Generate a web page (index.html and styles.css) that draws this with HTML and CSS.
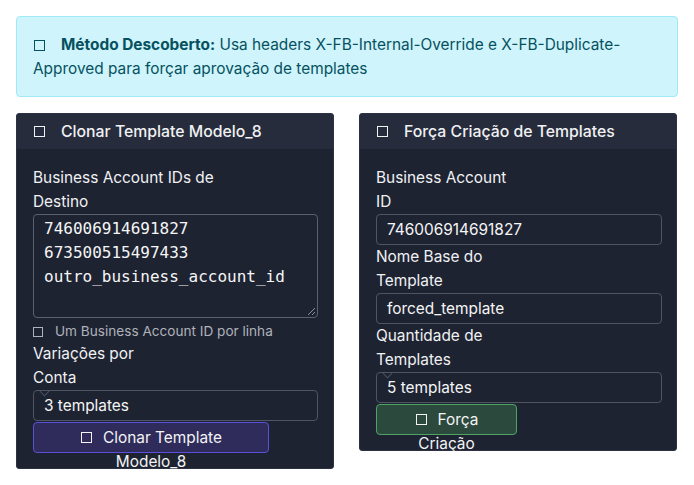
FILE: index.html
```html
<!DOCTYPE html>
<html lang="pt">
<head>
<meta charset="utf-8">
<title>Templates</title>
<link rel="stylesheet" href="styles.css">
</head>
<body>
<div class="page">
  <div class="alert">
    <span class="ico"></span><strong>Método Descoberto:</strong> Usa headers X-FB-Internal-Override e X-FB-Duplicate-Approved para forçar aprovação de templates
  </div>
  <div class="grid">
    <div class="card card-left">
      <div class="card-header"><span class="ico"></span>Clonar Template Modelo_8</div>
      <div class="card-body">
        <label class="lbl">Business Account IDs de<br>Destino</label>
        <div class="textarea">746006914691827<br>673500515497433<br>outro_business_account_id<span class="grip"></span></div>
        <div class="help"><span class="ico ico-sm"></span>Um Business Account ID por linha</div>
        <label class="lbl">Variações por<br>Conta</label>
        <div class="select">3 templates</div>
        <div class="btn btn-purple"><span class="ico"></span>Clonar Template<br>Modelo_8</div>
      </div>
    </div>
    <div class="card card-right">
      <div class="card-header"><span class="ico"></span>Força Criação de Templates</div>
      <div class="card-body">
        <label class="lbl">Business Account<br>ID</label>
        <div class="input">746006914691827</div>
        <label class="lbl">Nome Base do<br>Template</label>
        <div class="input">forced_template</div>
        <label class="lbl">Quantidade de<br>Templates</label>
        <div class="select">5 templates</div>
        <div class="btn btn-green"><span class="ico"></span>Força<br>Criação</div>
      </div>
    </div>
  </div>
</div>
</body>
</html>
```
FILE: styles.css
```css
* { box-sizing: border-box; }
html, body { margin: 0; padding: 0; background: #ffffff; }
body { font-family: Inter, "Noto Sans", sans-serif; font-size: 15.4px; line-height: 24px; }
.page { padding: 16px; }

.ico {
  display: inline-block;
  width: 11px;
  height: 11px;
  border: 1.5px solid currentColor;
  margin: 0 16px 0 1px;
  vertical-align: -1px;
}
.ico-sm { width: 10px; height: 10px; margin: 0 12px 0 0; }

.alert {
  background: #cff4fc;
  border: 1px solid #9eeaf9;
  border-radius: 4px;
  color: #055160;
  padding: 16px 16px 15px;
  margin-bottom: 16px;
}
.alert strong { font-weight: 700; }

.grid {
  display: grid;
  grid-template-columns: 318px 318px;
  column-gap: 25px;
  align-items: start;
}
.card {
  background: #1e2332;
  border: 1px solid #2c3242;
  border-radius: 3px;
  color: #f0f1f3;
}
.card-header {
  background: #262c3b;
  height: 35px;
  padding: 0 16px;
  display: flex;
  align-items: center;
  font-weight: 500;
  font-size: 15.8px;
}
.card-header .ico { margin-right: 16px; }
.card-body { padding: 17px 16px 15px; display: flex; flex-direction: column; align-items: flex-start; }
.lbl { display: block; }

.textarea {
  position: relative;
  width: 285px;
  height: 104px;
  border: 1px solid #5a6070;
  border-radius: 4px;
  padding: 2px 10px;
  font-family: "DejaVu Sans Mono", monospace;
  font-size: 16px;
  line-height: 24px;
  color: #f5f5f5;
}
.grip {
  position: absolute;
  right: 2px;
  bottom: 2px;
  width: 7px;
  height: 7px;
  background: linear-gradient(135deg, transparent 45%, #8a8f99 45%, #8a8f99 55%, transparent 55%, transparent 75%, #8a8f99 75%, #8a8f99 85%, transparent 85%);
}
.help {
  font-size: 13.6px;
  color: #aeb2ba;
  height: 24px;
  line-height: 27px;
}
.input, .select {
  position: relative;
  width: 285px;
  height: 31px;
  border: 1px solid #4f5565;
  border-radius: 4px;
  padding: 0 10px;
  line-height: 29px;
  color: #f5f5f5;
}
.card-right .input, .card-right .select { width: 286px; }
.select::before {
  content: "";
  position: absolute;
  left: 7px;
  top: -3px;
  width: 6px;
  height: 6px;
  border-right: 1px solid #485063;
  border-bottom: 1px solid #485063;
  transform: rotate(45deg);
}
.select { margin-bottom: 1px; }
.btn {
  height: 31px;
  border-radius: 4px;
  text-align: center;
  line-height: 24px;
  padding-top: 3px;
  color: #f3f3f5;
}
.btn .ico { margin-right: 11px; vertical-align: 0; }
.btn-purple {
  width: 236px;
  background: #2f2c5b;
  border: 1px solid #5b4fd8;
}
.btn-green {
  width: 141px;
  background: #2b4a3d;
  border: 1px solid #4fa364;
}
```
